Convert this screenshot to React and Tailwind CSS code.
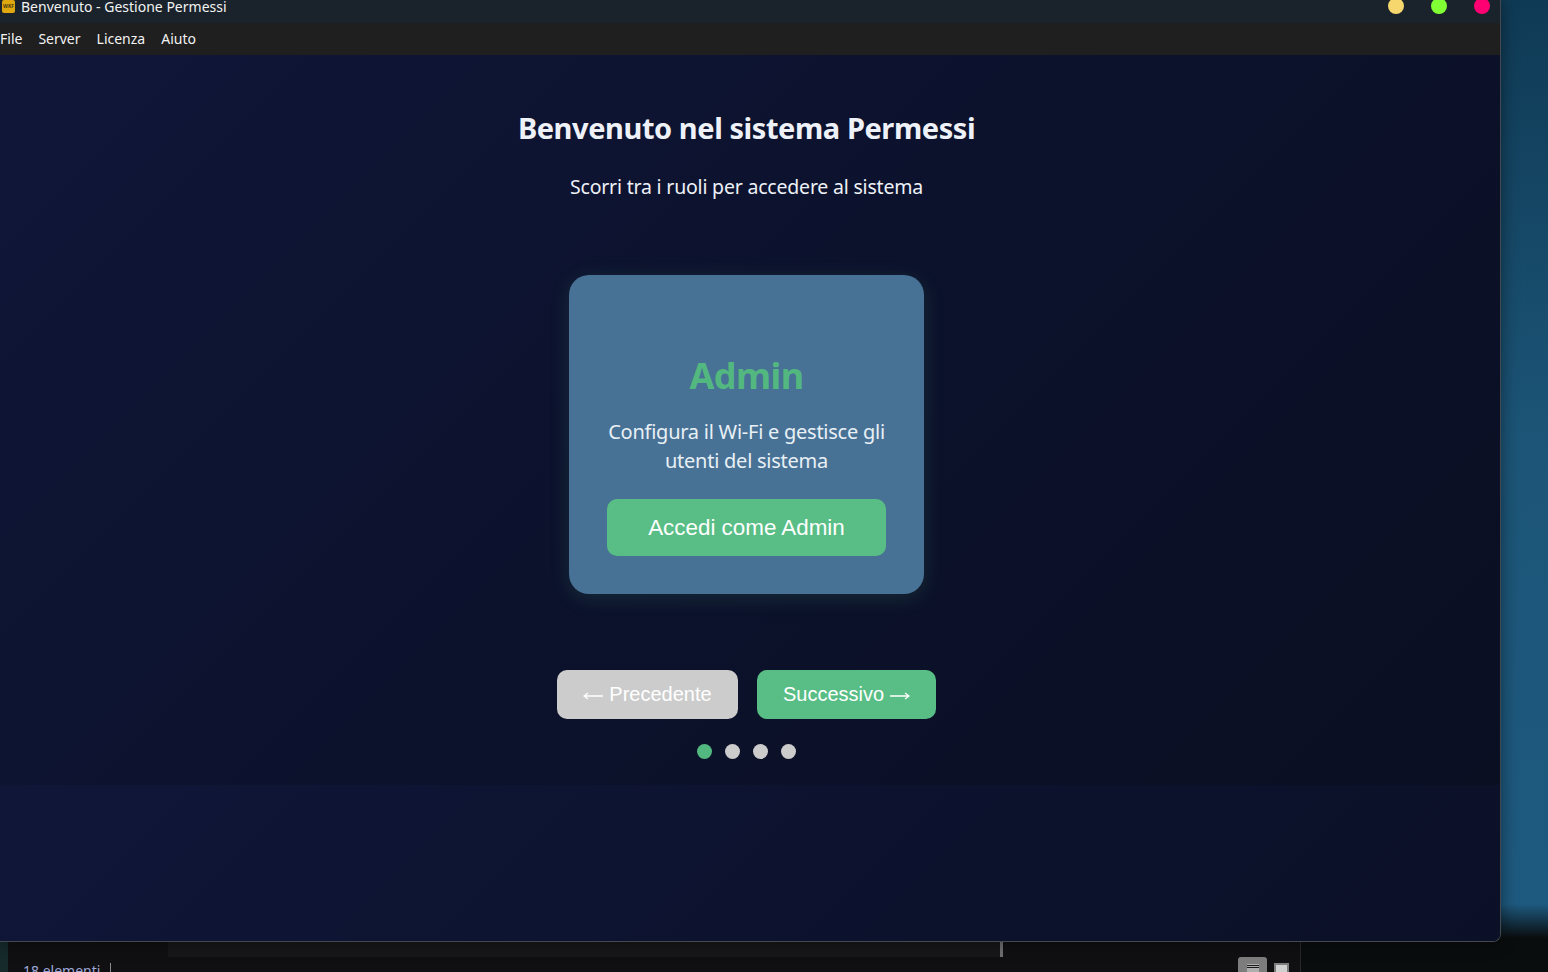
const MENU_ITEMS = ['File', 'Server', 'Licenza', 'Aiuto']
const SANS = "font-['Noto_Sans','Open_Sans',sans-serif]"
const ARIAL = "font-['Liberation_Sans',Arial,sans-serif]"

function TitleBar() {
  return (
    <div className="h-[31px] -mt-2 shrink-0 bg-[#1a232b] flex items-center justify-between pb-[3px] pl-[2px] pr-[10px]">
      <div className="flex items-center gap-[6px]">
        <div className="w-[13px] h-[13px] rounded-[2px] bg-[#e0a80f] flex items-center justify-center">
          <span className="text-[5px] leading-none font-bold text-[#4a3a10]">WKF</span>
        </div>
        <span className="mt-[2px] text-[14px] leading-[14px] text-[#f2f2f2]">Benvenuto - Gestione Permessi</span>
      </div>
      <div className="flex items-center gap-[27px]">
        <div className="w-4 h-4 rounded-full bg-[#f5d76e]" />
        <div className="w-4 h-4 rounded-full bg-[#80ff35]" />
        <div className="w-4 h-4 rounded-full bg-[#ff0073]" />
      </div>
    </div>
  )
}

function MenuBar() {
  return (
    <div className="h-8 shrink-0 bg-[#1f1f1f] flex items-center gap-4 pb-[2px] text-[14px] text-[#f2f2f2]">
      {MENU_ITEMS.map((item) => (
        <span key={item}>{item}</span>
      ))}
    </div>
  )
}

function Arrow({ left }) {
  return (
    <svg width="20" height="10" viewBox="0 0 20 10" fill="none" stroke="currentColor" strokeWidth="1.3" className="mt-[4px] shrink-0">
      {left ? <path d="M20 5H1M5 2 1 5l4 3" /> : <path d="M0 5h19M15 2l4 3-4 3" />}
    </svg>
  )
}

function RoleCard() {
  return (
    <div className="mt-[75px] w-[355px] h-[319px] rounded-[20px] bg-[#487295] shadow-[0_4px_20px_rgba(87,190,133,0.15)] flex flex-col items-center pt-[76px]">
      <h2 className="text-[36px] leading-[50px] font-bold text-[#53b87f] tracking-[-0.6px]">Admin</h2>
      <p className="mt-[16px] w-[300px] text-center text-[20px] leading-[29px] text-[#e8f0f6] tracking-[-0.25px]">
        Configura il Wi-Fi e gestisce gli utenti del sistema
      </p>
      <button className={`mt-[24px] w-[279px] h-[57px] rounded-[10px] bg-[#58be85] text-white text-[22.4px] ${ARIAL}`}>
        Accedi come Admin
      </button>
    </div>
  )
}

function Slider() {
  return (
    <div className="flex flex-col items-center">
      <div className={`mt-[76px] flex gap-[19px] text-white text-[20px] ${ARIAL}`}>
        <button className="w-[181px] h-[49px] pb-[2px] rounded-[10px] bg-[#cccccc] flex items-center justify-center gap-[6px]">
          <Arrow left />
          <span>Precedente</span>
        </button>
        <button className="w-[179px] h-[49px] pb-[2px] rounded-[10px] bg-[#58be85] flex items-center justify-center gap-[6px]">
          <span>Successivo</span>
          <Arrow />
        </button>
      </div>
      <div className="mt-[25px] flex gap-[13px]">
        <div className="w-[15px] h-[15px] rounded-full bg-[#53b87f]" />
        <div className="w-[15px] h-[15px] rounded-full bg-[#cccccc]" />
        <div className="w-[15px] h-[15px] rounded-full bg-[#cccccc]" />
        <div className="w-[15px] h-[15px] rounded-full bg-[#cccccc]" />
      </div>
    </div>
  )
}

function AppWindow() {
  return (
    <div className="relative z-10 w-[1501px] h-[942px] flex flex-col overflow-hidden rounded-br-[8px] border-r border-b border-[#44484f] shadow-[0_0_18px_rgba(0,0,0,0.45)]">
      <TitleBar />
      <MenuBar />
      <main className="flex-1 flex flex-col items-center pr-[7px] bg-[linear-gradient(135deg,#0f1638_0%,#0c122c_50%,#0a0f22_100%)] bg-[length:100%_730px]">
        <h1 className="mt-[52px] text-[29px] leading-[42px] font-bold text-[#eef1f7] tracking-[-0.43px]">
          Benvenuto nel sistema Permessi
        </h1>
        <p className="mt-[24px] text-[19.5px] leading-[27px] text-[#eef1f7] tracking-[-0.2px]">
          Scorri tra i ruoli per accedere al sistema
        </p>
        <RoleCard />
        <Slider />
      </main>
    </div>
  )
}

function ExplorerStrip() {
  return (
    <div className="h-[30px] flex">
      <div className="w-2 bg-[#16292b]" />
      <div className="w-[1293px] bg-[#101012] border-r border-[#26282b] flex flex-col">
        <div className="h-[15px] shrink-0 flex">
          <div className="w-[160px]" />
          <div className="w-[832px] bg-[#171719]" />
          <div className="w-[3px] bg-[#6f6f6f]" />
        </div>
        <div className="flex items-start justify-between">
          <div className="flex items-start mt-[4px]">
            <span className="ml-[15px] text-[14px] leading-[20px] text-[#9fa8d8]">18 elementi</span>
            <div className="ml-[10px] mt-[2px] w-px h-[12px] bg-[#8a8a8a]" />
          </div>
          <div className="flex items-start gap-[7px] mr-[11px]">
            <div className="w-[29px] h-[15px] rounded-t-[3px] bg-[#7d7d7d] flex justify-center pt-[7px]">
              <div className="w-[12px] h-[8px] bg-[#aeaeae] flex flex-col gap-[1px] pt-[1px]">
                <div className="h-px bg-[#1b1b1b]" />
                <div className="h-px bg-[#1b1b1b]" />
              </div>
            </div>
            <div className="mt-[6px] w-[15px] h-[9px] border-2 border-b-0 border-[#7d7d7d] bg-[#d0d0d0]" />
          </div>
        </div>
      </div>
    </div>
  )
}

export default function App() {
  return (
    <div className={`h-[972px] overflow-hidden bg-[linear-gradient(180deg,#0f3a55_0%,#1c5577_45%,#1e5a80_93%,#0a0d0e_96.5%,#0a0d0e_100%)] ${SANS}`}>
      <AppWindow />
      <ExplorerStrip />
    </div>
  )
}
